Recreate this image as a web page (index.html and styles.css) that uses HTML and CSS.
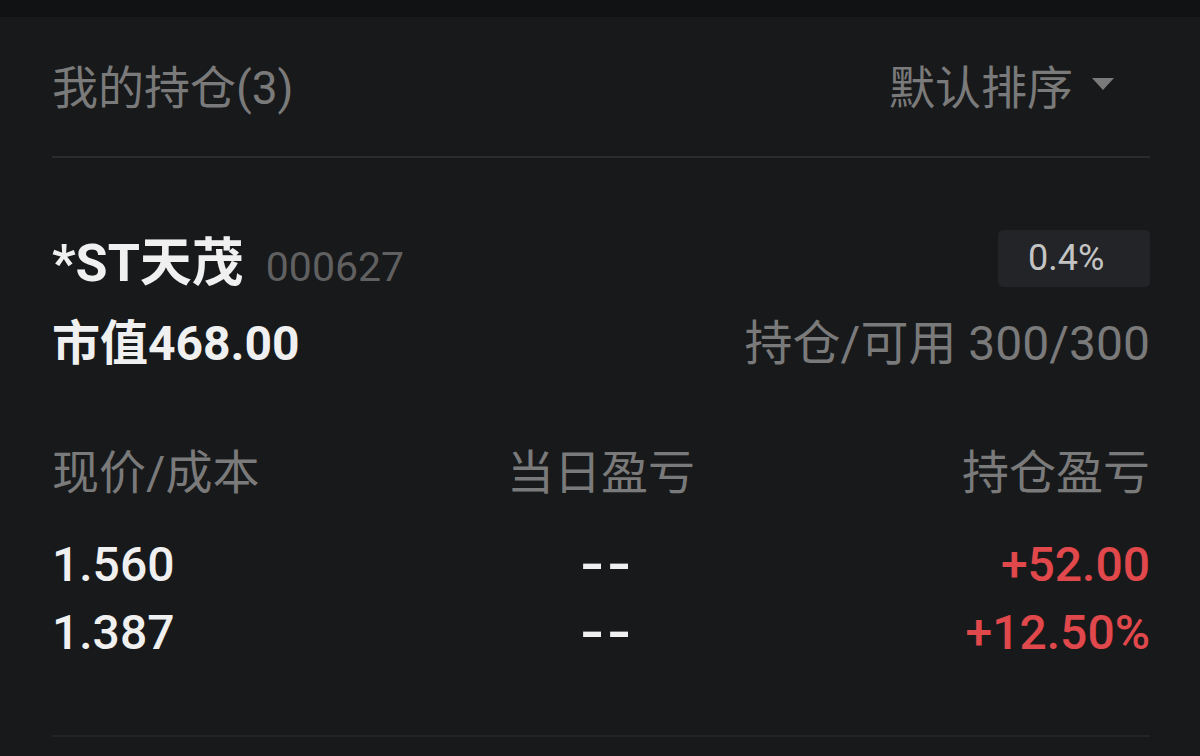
FILE: index.html
```html
<!DOCTYPE html>
<html lang="zh-CN">
<head>
  <meta charset="UTF-8" />
  <meta name="viewport" content="width=device-width, initial-scale=1.0"/>
  <title>我的持仓</title>
  <link rel="stylesheet" href="styles.css">
</head>
<body>

  <div class="topbar"></div>

  <div class="panel">
    <div class="head">
      <span class="head-title">我的持仓(3)</span>
      <span class="sort">默认排序<i class="caret"></i></span>
    </div>

    <div class="stock">
      <div class="name-row">
        <div>
          <span class="stock-name">*ST天茂</span>
          <span class="stock-code">000627</span>
        </div>
        <span class="ratio">0.4%</span>
      </div>

      <div class="value-row">
        <span class="market">市值468.00</span>
        <span class="qty">持仓/可用 300/300</span>
      </div>

      <div class="stats-head">
        <span>现价/成本</span>
        <span class="mid">当日盈亏</span>
        <span class="end">持仓盈亏</span>
      </div>
      <div class="stats-row">
        <span>1.560</span>
        <span class="mid dash">--</span>
        <span class="end up">+52.00</span>
      </div>
      <div class="stats-row">
        <span>1.387</span>
        <span class="mid dash">--</span>
        <span class="end up">+12.50%</span>
      </div>
    </div>
  </div>

</body>
</html>
```

FILE: styles.css
```css
body {
  margin: 0;
  font-family: Roboto, "Noto Sans CJK SC", sans-serif;
  background-color: #18191b;
  color: #f0f0f0;
}
.topbar {
  height: 17px;
  background: #111214;
}

.panel {
  padding: 0 50px 0 52px;
}
.head {
  box-sizing: border-box;
  height: 141px;
  padding-bottom: 6px;
  display: flex;
  align-items: center;
  justify-content: space-between;
  border-bottom: 2px solid #2a2b2e;
  color: #7a7a7a;
  font-size: 46px;
}
.sort {
  display: flex;
  align-items: center;
  padding-right: 36px;
}
.caret {
  width: 0;
  height: 0;
  margin-left: 19px;
  border-left: 11px solid transparent;
  border-right: 11px solid transparent;
  border-top: 12px solid #7a7a7a;
}

.stock {
  padding: 72px 0 68px;
  border-bottom: 2px solid #232427;
}
.name-row, .value-row {
  display: flex;
  align-items: center;
  justify-content: space-between;
}
.name-row {
  height: 57px;
}
.stock-name {
  font-size: 52px;
  font-weight: bold;
}
.stock-code {
  margin-left: 18px;
  font-size: 41px;
  color: #606060;
}
.ratio {
  box-sizing: border-box;
  width: 152px;
  height: 57px;
  line-height: 57px;
  padding-left: 30px;
  background: #232427;
  border-radius: 5px;
  font-size: 36px;
  color: #c4c4c4;
}

.value-row {
  margin-top: 29px;
  line-height: 56px;
}
.market {
  font-size: 48px;
  font-weight: bold;
}
.qty {
  font-size: 48px;
  color: #7a7a7a;
}

.stats-head, .stats-row {
  display: grid;
  grid-template-columns: 1fr 1fr 1fr;
  align-items: center;
}
.stats-head {
  margin-top: 73px;
  margin-bottom: 30px;
  line-height: 56px;
  font-size: 47px;
  color: #7a7a7a;
}
.stats-row {
  line-height: 68px;
  font-size: 48px;
  font-weight: 500;
}
.mid {
  text-align: center;
}
.dash {
  padding-left: 8px;
  letter-spacing: 1px;
  font-weight: bold;
  transform: scaleX(1.35);
}
.end {
  text-align: right;
}
.up {
  color: #e0484b;
}
```
